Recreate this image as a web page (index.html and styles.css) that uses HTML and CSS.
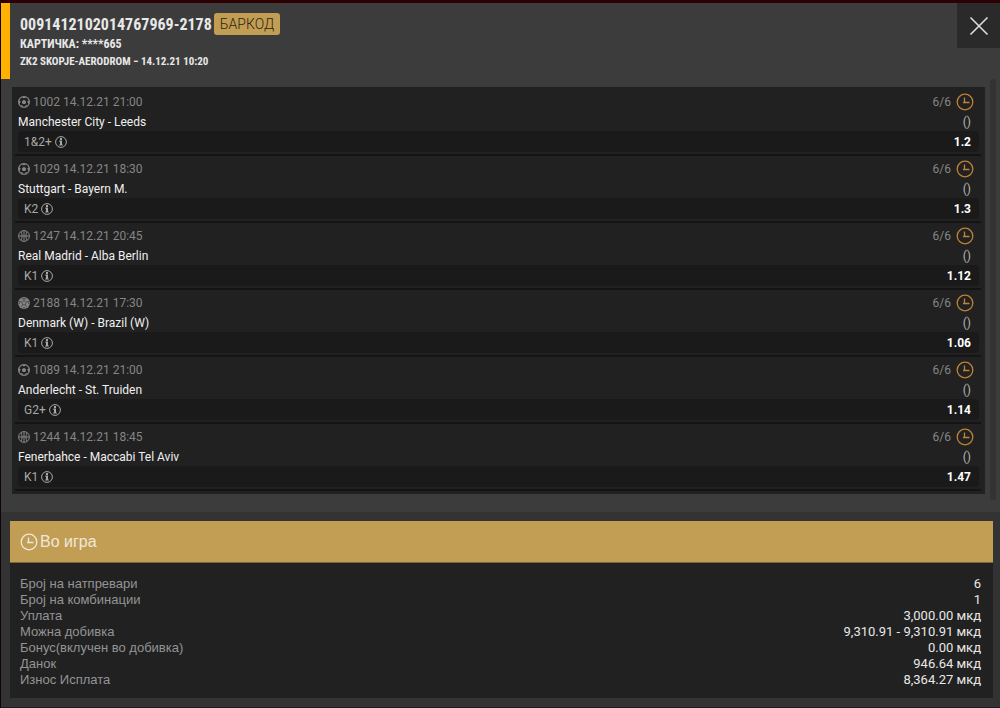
FILE: index.html
```html
<!DOCTYPE html>
<html lang="mk">
<head>
    <meta charset="UTF-8">
    <meta name="viewport" content="width=device-width, initial-scale=1.0">
    <title>0091412102014767969-2178</title>
    <link rel="stylesheet" href="styles.css">
</head>
<body>
    <!-- Shared icons -->
    <svg class="sprite" aria-hidden="true">
        <symbol id="football" viewBox="0 0 12 12">
            <circle cx="6" cy="6" r="5.4" fill="none" stroke="currentColor" stroke-width="1.2"/>
            <path d="M6 3.8L8.2 5.4L7.4 8H4.6L3.8 5.4ZM3.6 .8H8.4L6 2.6ZM.6 4L2.6 5.2L1.8 7.8L.6 7.4ZM11.4 4L9.4 5.2L10.2 7.8L11.4 7.4ZM2.2 9.6L4.4 9.2L5.2 11.4ZM9.8 9.6L7.6 9.2L6.8 11.4Z" fill="currentColor"/>
        </symbol>
        <symbol id="basketball" viewBox="0 0 12 12">
            <g fill="none" stroke="currentColor">
                <circle cx="6" cy="6" r="5.4"/>
                <path d="M6 .6V11.4M.6 6H11.4M3 1.6C4.4 4 4.4 8 3 10.4M9 1.6C7.6 4 7.6 8 9 10.4"/>
            </g>
        </symbol>
        <symbol id="handball" viewBox="0 0 12 12">
            <circle cx="6" cy="6" r="5.9" fill="currentColor"/>
            <path d="M6 3.6L8.2 5.2L7.4 7.8H4.6L3.8 5.2ZM6 3.6V1.6M8.2 5.2L10.4 4.2M7.4 7.8L8.8 9.8M4.6 7.8L3.2 9.8M3.8 5.2L1.6 4.2M3.4 2L6 1.6L8.6 2M10.4 4.2L10.6 7M1.6 4.2L1.4 7M4.6 10.7H7.4" fill="none" stroke="#212121" stroke-width=".5"/>
        </symbol>
        <symbol id="clock" viewBox="0 0 18 18">
            <g fill="none" stroke="currentColor" stroke-width="1.3">
                <circle cx="9" cy="9" r="7.8"/>
                <path d="M8.5 4.5V10M7 9.5H13.5"/>
            </g>
        </symbol>
        <symbol id="info" viewBox="0 0 12 12">
            <circle cx="6" cy="6" r="5.4" fill="none" stroke="currentColor"/>
            <path d="M5 2.1H7V3.9H5ZM4.3 4.6H7V8.4H7.8V9.5H4.2V8.4H5V5.7H4.3Z" fill="currentColor"/>
        </symbol>
    </svg>

    <div class="modal">
        <header class="ticket-header">
            <div class="ticket-info">
                <div class="ticket-title">
                    <h1>0091412102014767969-2178</h1>
                    <button class="barcode-btn">БАРКОД</button>
                </div>
                <p class="card-number">КАРТИЧКА: ****665</p>
                <p class="location">ZK2 SKOPJE-AERODROM − 14.12.21 10:20</p>
            </div>
            <button class="close-btn" aria-label="Затвори">
                <svg width="20" height="20" viewBox="0 0 20 20"><path d="M1.5 1.5L18.5 18.5M18.5 1.5L1.5 18.5" stroke="currentColor" stroke-width="1.6"/></svg>
            </button>
        </header>

        <div class="matches-wrap">
            <div class="matches">
                <div class="match">
                    <div class="match-meta"><svg class="sport"><use href="#football"/></svg><span>1002 14.12.21 21:00</span><span class="count">6/6</span><svg class="clock"><use href="#clock"/></svg></div>
                    <div class="match-name"><span>Manchester City - Leeds</span><span class="score">()</span></div>
                    <div class="match-tip"><span>1&amp;2+</span><svg class="info"><use href="#info"/></svg><b class="odd">1.2</b></div>
                </div>
                <div class="match">
                    <div class="match-meta"><svg class="sport"><use href="#football"/></svg><span>1029 14.12.21 18:30</span><span class="count">6/6</span><svg class="clock"><use href="#clock"/></svg></div>
                    <div class="match-name"><span>Stuttgart - Bayern M.</span><span class="score">()</span></div>
                    <div class="match-tip"><span>K2</span><svg class="info"><use href="#info"/></svg><b class="odd">1.3</b></div>
                </div>
                <div class="match">
                    <div class="match-meta"><svg class="sport"><use href="#basketball"/></svg><span>1247 14.12.21 20:45</span><span class="count">6/6</span><svg class="clock"><use href="#clock"/></svg></div>
                    <div class="match-name"><span>Real Madrid - Alba Berlin</span><span class="score">()</span></div>
                    <div class="match-tip"><span>K1</span><svg class="info"><use href="#info"/></svg><b class="odd">1.12</b></div>
                </div>
                <div class="match">
                    <div class="match-meta"><svg class="sport"><use href="#handball"/></svg><span>2188 14.12.21 17:30</span><span class="count">6/6</span><svg class="clock"><use href="#clock"/></svg></div>
                    <div class="match-name"><span>Denmark (W) - Brazil (W)</span><span class="score">()</span></div>
                    <div class="match-tip"><span>K1</span><svg class="info"><use href="#info"/></svg><b class="odd">1.06</b></div>
                </div>
                <div class="match">
                    <div class="match-meta"><svg class="sport"><use href="#football"/></svg><span>1089 14.12.21 21:00</span><span class="count">6/6</span><svg class="clock"><use href="#clock"/></svg></div>
                    <div class="match-name"><span>Anderlecht - St. Truiden</span><span class="score">()</span></div>
                    <div class="match-tip"><span>G2+</span><svg class="info"><use href="#info"/></svg><b class="odd">1.14</b></div>
                </div>
                <div class="match">
                    <div class="match-meta"><svg class="sport"><use href="#basketball"/></svg><span>1244 14.12.21 18:45</span><span class="count">6/6</span><svg class="clock"><use href="#clock"/></svg></div>
                    <div class="match-name"><span>Fenerbahce - Maccabi Tel Aviv</span><span class="score">()</span></div>
                    <div class="match-tip"><span>K1</span><svg class="info"><use href="#info"/></svg><b class="odd">1.47</b></div>
                </div>
            </div>
            <div class="scrollbar"></div>
        </div>

        <section class="summary">
            <h2 class="status"><svg class="clock"><use href="#clock"/></svg>Во игра</h2>
            <dl class="totals">
                <div><dt>Број на натпревари</dt><dd>6</dd></div>
                <div><dt>Број на комбинации</dt><dd>1</dd></div>
                <div><dt>Уплата</dt><dd>3,000.00 мкд</dd></div>
                <div><dt>Можна добивка</dt><dd>9,310.91 - 9,310.91 мкд</dd></div>
                <div><dt>Бонус(вклучен во добивка)</dt><dd>0.00 мкд</dd></div>
                <div><dt>Данок</dt><dd>946.64 мкд</dd></div>
                <div><dt>Износ Исплата</dt><dd>8,364.27 мкд</dd></div>
            </dl>
        </section>
    </div>
</body>
</html>
```

FILE: styles.css
```css
* {
    box-sizing: border-box;
}

body {
    margin: 0;
    padding-top: 3px;
    background: #2d0004;
    font-family: Roboto, sans-serif;
    font-size: 12px;
    color: #e8e8e8;
}

h1, h2, p, dl, dd {
    margin: 0;
}

button {
    border: none;
    cursor: pointer;
}

svg {
    display: block;
    flex: none;
}

.sprite {
    position: absolute;
    width: 0;
    height: 0;
}

.modal {
    background: #3c3c3c;
    border-left: 1px solid #120506;
}

/* Header */
.ticket-header {
    display: flex;
    justify-content: space-between;
    align-items: flex-start;
}

.ticket-info {
    height: 76px;
    padding: 10px 0 0 10px;
    border-left: 9px solid #ffb000;
    font-family: "Roboto Condensed", "Liberation Sans Narrow", Roboto, sans-serif;
    font-weight: bold;
}

.ticket-title {
    display: flex;
    align-items: center;
    gap: 2px;
    height: 22px;
}

h1 {
    font-size: 16px;
}

.barcode-btn {
    height: 22px;
    padding: 0 6px;
    border-radius: 3px;
    background: #c29e54;
    color: #2b2412;
    font-family: Roboto, sans-serif;
    font-size: 14px;
    font-weight: 300;
}

.card-number,
.location {
    font-size: 12px;
    line-height: 18px;
}

.location {
    font-size: 11px;
}

.close-btn {
    display: flex;
    align-items: center;
    justify-content: center;
    width: 43px;
    height: 45px;
    padding: 0;
    background: #2a2a2a;
    color: #ddd;
}

/* Matches */
.matches-wrap {
    display: flex;
    gap: 5px;
    padding: 0 4px 18px 11px;
}

.matches {
    flex: 1;
    margin-top: 8px;
    padding: 2px 4px 3px 3px;
    background: #212121;
}

.match {
    padding: 3px 2px 2px 3px;
    border-bottom: 2px solid #141414;
}

.match-meta,
.match-name,
.match-tip {
    display: flex;
    align-items: center;
}

.match-meta {
    height: 20px;
    gap: 3px;
    color: #858585;
}

.sport,
.info {
    width: 12px;
    height: 12px;
}

.clock {
    width: 18px;
    height: 18px;
}

.count {
    margin-left: auto;
}

.match-meta .clock {
    margin: 0 5px 0 2px;
    color: #bd8238;
}

.match-name {
    height: 19px;
    color: #f0f0f0;
}

.score {
    margin: 0 8px 0 auto;
    color: #b5b5b5;
}

.match-tip {
    height: 21px;
    gap: 3px;
    padding: 0 8px 0 6px;
    border-radius: 4px;
    background: #1a1a1a;
    color: #a8a8a8;
}

.odd {
    margin-left: auto;
    color: #fff;
}

.scrollbar {
    width: 6px;
    border-radius: 3px;
    background: #333;
    margin-bottom: -6px;
}

/* Summary */
.summary {
    padding: 9px 7px 9px 9px;
    background: #333;
    border-bottom: 1px solid #1c1c1c;
}

.status {
    display: flex;
    align-items: center;
    gap: 2px;
    height: 42px;
    padding-left: 10px;
    background: #c29e54;
    border-bottom: 1px solid #7d6638;
    color: #eee8dc;
    font-family: "Liberation Sans", sans-serif;
    font-size: 16px;
    font-weight: normal;
}

.totals {
    padding: 13px 12px 10px 10px;
    background: #212121;
    font-size: 13px;
    line-height: 16px;
}

.totals div {
    display: flex;
    justify-content: space-between;
}

.totals dt {
    color: #949494;
    font-family: "Liberation Sans", sans-serif;
}
```
